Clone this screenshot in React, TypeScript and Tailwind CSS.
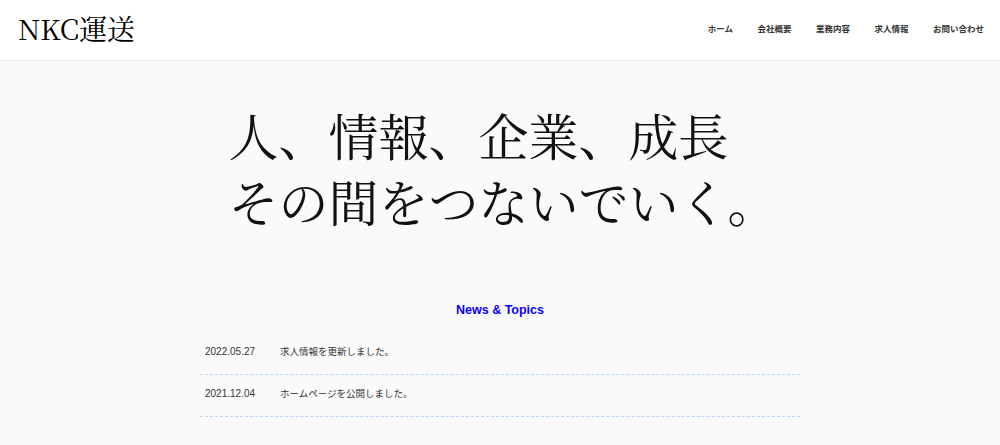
const nav = ['ホーム', '会社概要', '業務内容', '求人情報', 'お問い合わせ'];

const news = [
  { date: '2022.05.27', text: '求人情報を更新しました。' },
  { date: '2021.12.04', text: 'ホームページを公開しました。' },
];

const serif = { fontFamily: '"Noto Serif CJK JP", "Liberation Serif", "Noto Sans CJK JP", serif' };
const sans = { fontFamily: '"Liberation Sans", "Noto Sans CJK JP", sans-serif' };

export default function App() {
  return (
    <div className="min-h-[445px] bg-[#fafafa] text-[#222]">
      <header className="h-[61px] bg-white border-b border-[#ececec] flex items-center justify-between pl-[18px] pr-[16px]">
        <h1 className="text-[28px] leading-none text-black mt-[-4px]" style={serif}>
          NKC運送
        </h1>
        <nav className="flex gap-[24.5px] mt-[-2px]">
          {nav.map((item) => (
            <a key={item} className="text-[8.5px] font-bold text-[#333]" style={sans}>
              {item}
            </a>
          ))}
        </nav>
      </header>

      <section className="flex justify-center pt-[40px] pl-[6px]">
        <p className="text-[50px] leading-[66px] text-[#111] text-left" style={serif}>
          人、情報、企業、成長
          <br />
          その間をつないでいく。
        </p>
      </section>

      <section className="w-[600px] mx-auto mt-[67px]">
        <h2
          className="text-center text-[12.5px] leading-[20px] font-bold text-[#0a00ff] mb-[13px]"
          style={{ fontFamily: '"Liberation Sans", sans-serif' }}
        >
          News &amp; Topics
        </h2>
        <ul>
          {news.map((n) => (
            <li
              key={n.date}
              className="flex pl-[5px] pt-[12px] pb-[15px] text-[10px] leading-[14px] text-[#333] border-b border-dashed border-[#bcd8f5]"
              style={sans}
            >
              <span className="w-[75px]">{n.date}</span>
              <span className="text-[9.5px]">{n.text}</span>
            </li>
          ))}
        </ul>
      </section>
    </div>
  );
}
